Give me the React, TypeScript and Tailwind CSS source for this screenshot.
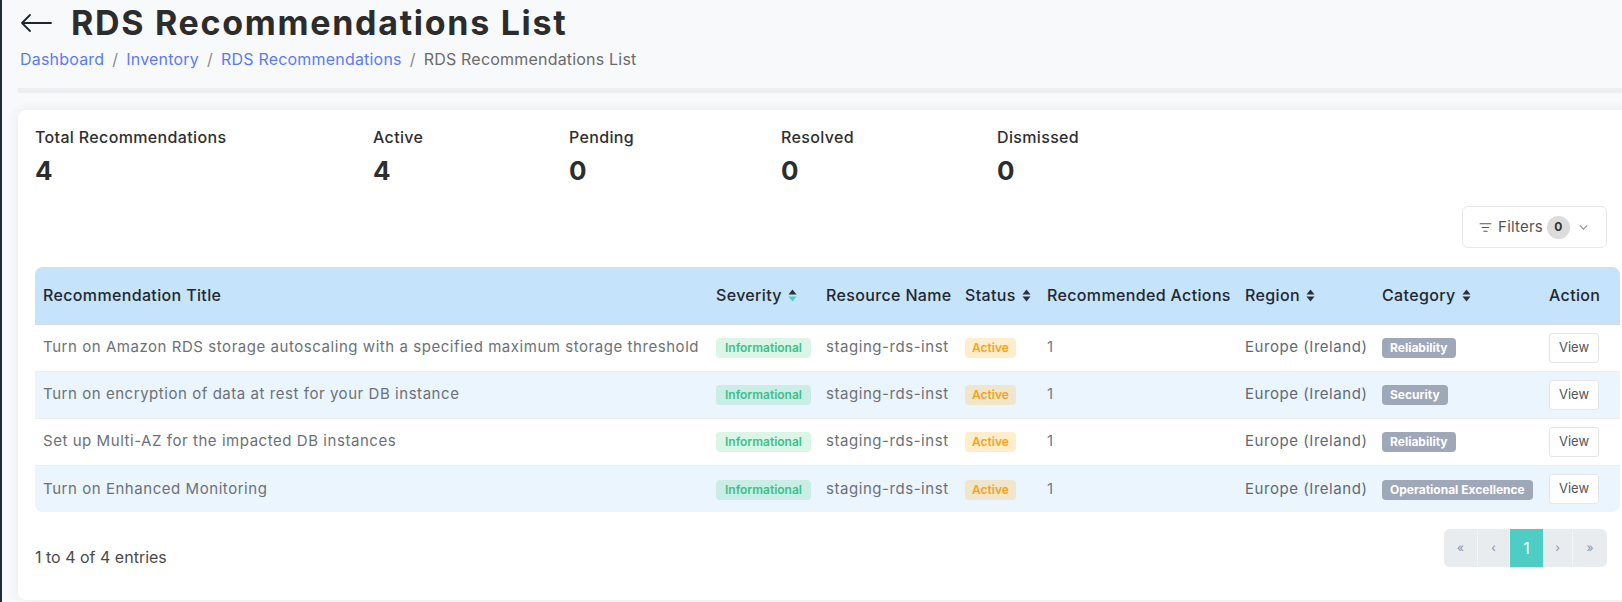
import { ChevronDown, ListFilter } from 'lucide-react';

const rows = [
  { title: 'Turn on Amazon RDS storage autoscaling with a specified maximum storage threshold', category: 'Reliability' },
  { title: 'Turn on encryption of data at rest for your DB instance', category: 'Security' },
  { title: 'Set up Multi-AZ for the impacted DB instances', category: 'Reliability' },
  { title: 'Turn on Enhanced Monitoring', category: 'Operational Excellence' },
];

const stats = [
  { label: 'Total Recommendations', value: '4', w: 'w-[338px]' },
  { label: 'Active', value: '4', w: 'w-[196px]' },
  { label: 'Pending', value: '0', w: 'w-[212px]' },
  { label: 'Resolved', value: '0', w: 'w-[216px]' },
  { label: 'Dismissed', value: '0', w: 'w-[200px]' },
];

function SortIcon({ active }: { active?: boolean }) {
  return (
    <svg width="9" height="13" viewBox="0 0 9 13" className="ml-[6px] shrink-0">
      <path d="M4.5 0.5 L8.5 5.5 L0.5 5.5 Z" fill="#2b2f36" />
      <path d="M4.5 12.5 L8.5 7.5 L0.5 7.5 Z" fill={active ? '#4ecdc4' : '#2b2f36'} />
    </svg>
  );
}

function Th({ children, sort, active }: { children: React.ReactNode; sort?: boolean; active?: boolean }) {
  return (
    <th className="pl-[8px] text-left font-medium text-[16px] tracking-[0.35px] text-[#23272e] whitespace-nowrap">
      <div className="flex items-center">
        {children}
        {sort && <SortIcon active={active} />}
      </div>
    </th>
  );
}

export default function App() {
  return (
    <div
      className="w-[1622px] h-[602px] overflow-hidden bg-[#f8f9fb] border-l-2 border-[#232a36]"
      style={{ fontFamily: 'Inter, "Noto Sans", sans-serif' }}
    >
      <div className="pl-[16px]">
        {/* Page header */}
        <div className="pt-[4px] flex items-center">
          <svg width="32" height="20" viewBox="0 0 32 20" className="ml-[2px] mr-[19px]">
            <path d="M31 10 H2 M10 2 L2 10 L10 18" stroke="#1f2530" strokeWidth="1.8" fill="none" strokeLinecap="round" strokeLinejoin="round" />
          </svg>
          <h1 className="text-[34px] leading-[38px] font-bold text-[#2c2c2c] tracking-[1.7px]">RDS Recommendations List</h1>
        </div>
        <div className="mt-[7px] ml-[2px] flex items-center text-[16px] leading-[20px] tracking-[0.2px]">
          <span className="text-[#5b7bf5]">Dashboard</span>
          <span className="mx-[8px] text-[#8a8a8a]">/</span>
          <span className="text-[#5b7bf5]">Inventory</span>
          <span className="mx-[8px] text-[#8a8a8a]">/</span>
          <span className="text-[#5b7bf5]">RDS Recommendations</span>
          <span className="mx-[8px] text-[#8a8a8a]">/</span>
          <span className="text-[#6b6b6b]">RDS Recommendations List</span>
        </div>
        <div className="mt-[19px] h-[5px] bg-[#eeeeee]" />

        {/* Card */}
        <div className="mt-[17px] w-[1640px] h-[490px] bg-white rounded-lg shadow-[0_0_12px_rgba(30,60,90,0.08)] pl-[17px] pt-[17px]">
          <div className="w-[1585px]">
            <div className="flex">
              {stats.map((s) => (
                <div key={s.label} className={s.w}>
                  <div className="text-[16px] leading-[20px] tracking-[0.35px] font-medium text-[#2f2f2f]">{s.label}</div>
                  <div className="mt-[9px] text-[26px] leading-[30px] font-bold text-[#2d2d2d]">{s.value}</div>
                </div>
              ))}
            </div>

            <div className="mt-[20px] flex justify-end pr-[13px]">
              <button className="h-[42px] w-[145px] flex items-center justify-center rounded-md border border-[#e8e8e8] bg-white">
                <ListFilter size={13} strokeWidth={2} className="text-[#555] mr-[6px]" />
                <span className="text-[15px] tracking-[0.2px] text-[#555]">Filters</span>
                <span className="ml-[4px] w-[23px] h-[23px] rounded-full bg-[#dcdcdc] flex items-center justify-center text-[12px] font-bold text-[#333]">0</span>
                <ChevronDown size={13} strokeWidth={2} className="ml-[7px] text-[#8a8f98]" />
              </button>
            </div>

            <div className="mt-[19px] rounded-lg overflow-hidden">
              <table className="w-[1585px] table-fixed border-collapse">
                <colgroup>
                  <col className="w-[673px]" />
                  <col className="w-[110px]" />
                  <col className="w-[139px]" />
                  <col className="w-[82px]" />
                  <col className="w-[198px]" />
                  <col className="w-[137px]" />
                  <col className="w-[167px]" />
                  <col className="w-[79px]" />
                </colgroup>
                <thead>
                  <tr className="h-[57px] bg-[#c5e3fb] border-b border-[#d6dbe1]">
                    <Th>Recommendation Title</Th>
                    <Th sort active>Severity</Th>
                    <Th>Resource Name</Th>
                    <Th sort>Status</Th>
                    <Th>Recommended Actions</Th>
                    <Th sort>Region</Th>
                    <Th sort>Category</Th>
                    <Th>Action</Th>
                  </tr>
                </thead>
                <tbody>
                  {rows.map((r, i) => (
                    <tr
                      key={r.title}
                      className={`h-[47px] text-[15px] tracking-[0.55px] text-[#6c7178] ${i % 2 === 1 ? 'bg-[#ebf5fe]' : 'bg-white'} ${i < rows.length - 1 ? 'border-b border-[#eceef1]' : ''}`}
                    >
                      <td className="pl-[8px] whitespace-nowrap">{r.title}</td>
                      <td className="pl-[8px] tracking-normal">
                        <span className="inline-flex items-center h-[20px] px-[9px] rounded-[4px] bg-[#28c76f]/[0.17] text-[#3ec08a] text-[12px] font-semibold">Informational</span>
                      </td>
                      <td className="pl-[8px] whitespace-nowrap">staging-rds-inst</td>
                      <td className="pl-[8px] tracking-normal">
                        <span className="inline-flex items-center h-[20px] px-[7px] rounded-[4px] bg-[#ffaa00]/20 text-[#f7a21b] text-[12px] font-semibold">Active</span>
                      </td>
                      <td className="pl-[8px] text-[#6f7b92]">1</td>
                      <td className="pl-[8px] whitespace-nowrap text-[#5f6976]">Europe (Ireland)</td>
                      <td className="pl-[8px] tracking-normal">
                        <span className="inline-flex items-center h-[20px] px-[8px] rounded-[4px] bg-[#9fa8b9] text-white text-[12px] font-bold whitespace-nowrap">{r.category}</span>
                      </td>
                      <td className="pl-[8px] tracking-normal">
                        <button className="w-[50px] h-[30px] rounded-[3px] border border-[#e4e6ea] bg-white text-[13px] text-[#555]">View</button>
                      </td>
                    </tr>
                  ))}
                </tbody>
              </table>
            </div>

            <div className="flex justify-between items-start pr-[13px]">
              <div className="mt-[35px] text-[16px] leading-[20px] text-[#4a4a4a]">1 to 4 of 4 entries</div>
              <div className="mt-[17px] flex h-[38px] rounded-md overflow-hidden bg-[#e9ecef] text-[#8a94a6]">
                <div className="w-[34px] flex items-center justify-center text-[12px] border-r border-[#f3f4f6]">«</div>
                <div className="w-[32px] flex items-center justify-center text-[12px] border-r border-[#f3f4f6]">‹</div>
                <div className="w-[33px] flex items-center justify-center bg-[#4ecdc4] text-white text-[16px]">1</div>
                <div className="w-[30px] flex items-center justify-center text-[12px] border-r border-[#f3f4f6]">›</div>
                <div className="w-[34px] flex items-center justify-center text-[12px]">»</div>
              </div>
            </div>
          </div>
        </div>
      </div>
    </div>
  );
}
